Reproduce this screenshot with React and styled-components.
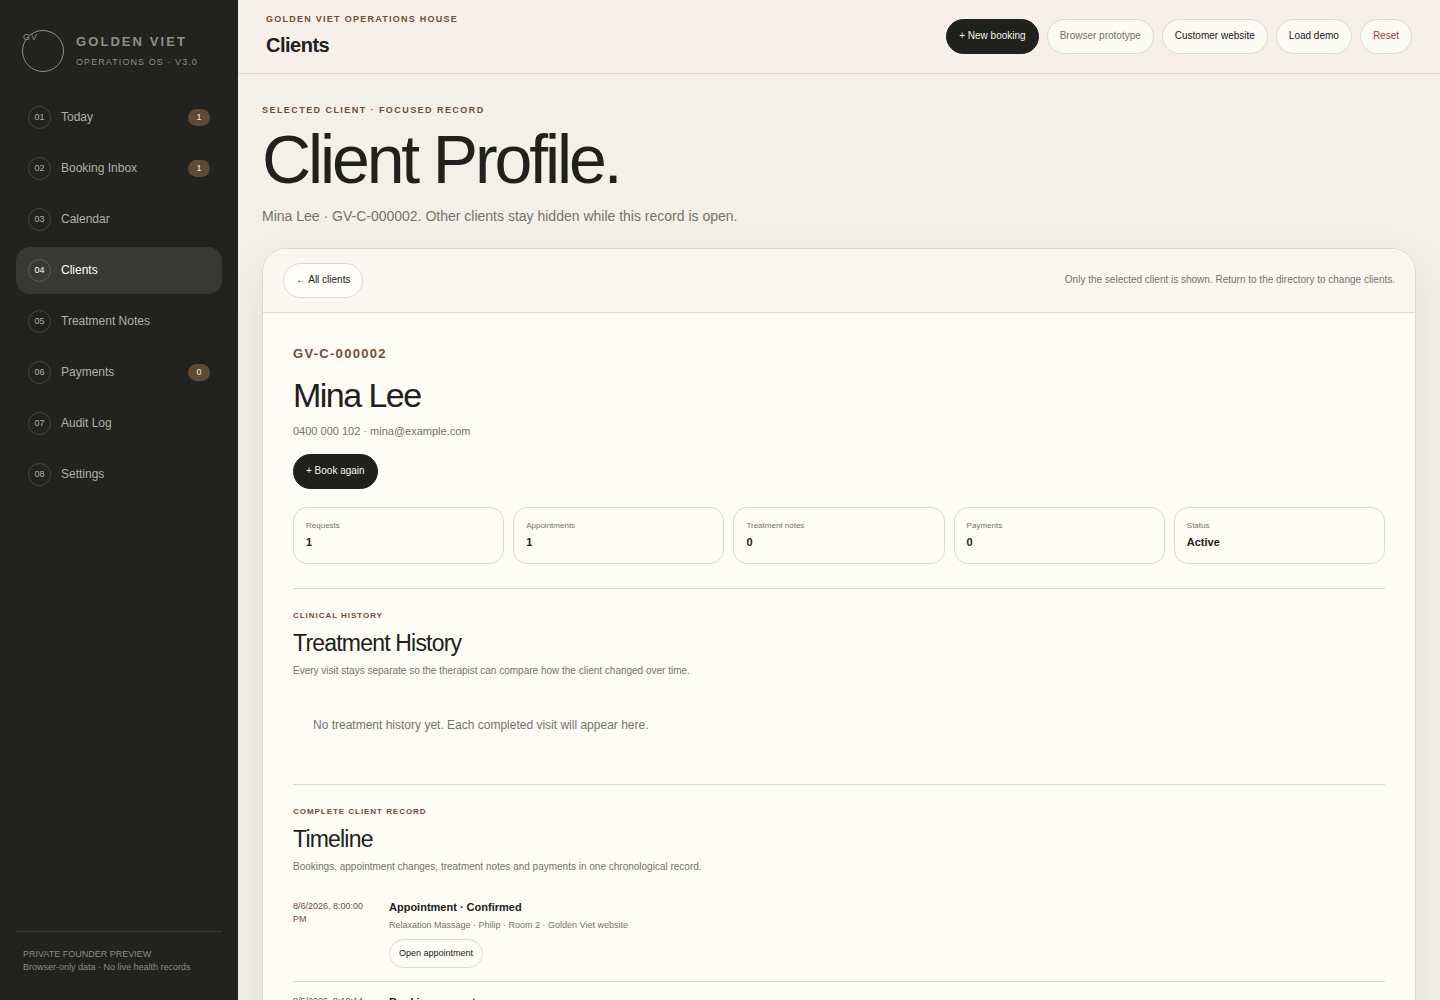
import React, { useState } from 'react';
import styled, { createGlobalStyle } from 'styled-components';

const Colors = {
  ink: '#20201c',
  sidebar: '#22221f',
  paper: '#fdfcf5',
  page: '#f3f0e8',
  topbar: '#f6f0e9',
  line: '#d9d9d3',
  muted: '#74736a',
  brown: '#6f4e37',
  badge: '#5f4a33',
  danger: '#9a4338',
};

const GlobalStyle = createGlobalStyle`
  * {
    box-sizing: border-box;
  }

  body {
    margin: 0;
    background: ${Colors.page};
    color: ${Colors.ink};
    font-family: 'Liberation Sans', Arial, sans-serif;
  }

  h1, h2, h3, p, dl, dd, ol {
    margin: 0;
    padding: 0;
  }

  button {
    font-family: inherit;
    cursor: pointer;
  }
`;

const Shell = styled.div`
  display: grid;
  grid-template-columns: 238px minmax(0, 1fr);
  min-height: 100vh;
`;

const Sidebar = styled.aside`
  position: sticky;
  top: 0;
  display: flex;
  flex-direction: column;
  height: 100vh;
  padding: 30px 16px 26px;
  background: ${Colors.sidebar};
`;

const Brand = styled.div`
  display: flex;
  align-items: center;
  gap: 12px;
  padding: 0 6px;
  margin-bottom: 22px;
  color: #8f8f89;
`;

const Logo = styled.span`
  width: 42px;
  height: 42px;
  border: 1px solid #8f8f89;
  border-radius: 50%;
  font-size: 9px;
  line-height: 12px;
  letter-spacing: 0.12em;
`;

const BrandText = styled.div`
  display: flex;
  flex-direction: column;
  gap: 8px;
`;

const BrandName = styled.strong`
  font-size: 13px;
  line-height: 15px;
  letter-spacing: 0.16em;
`;

const BrandSub = styled.span`
  font-size: 9px;
  line-height: 11px;
  letter-spacing: 0.12em;
`;

const Nav = styled.nav`
  display: flex;
  flex-direction: column;
  gap: 4px;
`;

const NavItem = styled.button`
  display: flex;
  align-items: center;
  gap: 10px;
  height: 47px;
  padding: 0 12px;
  border: 0;
  border-radius: 14px;
  background: ${(props) => (props.$active ? '#383834' : 'transparent')};
  color: ${(props) => (props.$active ? '#ffffff' : '#b0b0a9')};
  font-size: 12px;
  text-align: left;
`;

const NavNumber = styled.span`
  width: 23px;
  height: 23px;
  border: 1px solid ${(props) => (props.$active ? '#5e5e59' : '#474743')};
  border-radius: 50%;
  font-size: 9px;
  line-height: 20px;
  text-align: center;
`;

const NavLabel = styled.span`
  padding-bottom: 2px;
`;

const NavBadge = styled.span`
  min-width: 22px;
  margin-left: auto;
  padding: 3px 6px;
  border-radius: 9px;
  background: ${Colors.badge};
  color: #f3efe6;
  font-size: 9px;
  line-height: 11px;
  text-align: center;
`;

const SidebarFoot = styled.div`
  margin-top: auto;
  padding: 16px 7px 0;
  border-top: 1px solid #3b3b38;
  color: #8b8b85;
  font-size: 9px;
  line-height: 13px;
`;

const Topbar = styled.header`
  display: flex;
  align-items: center;
  justify-content: space-between;
  height: 74px;
  padding: 0 28px;
  border-bottom: 1px solid ${Colors.line};
  background: ${Colors.topbar};
`;

const TopTitle = styled.div`
  display: flex;
  flex-direction: column;
  gap: 8px;
  padding-bottom: 4px;
`;

const Eyebrow = styled.p`
  color: ${Colors.brown};
  font-size: ${(props) => (props.$small ? '8px' : '9px')};
  font-weight: 700;
  line-height: 12px;
  letter-spacing: ${(props) => props.$tracking || '0.12em'};
`;

const SectionName = styled.strong`
  font-size: 20px;
  line-height: 24px;
  letter-spacing: -0.025em;
`;

const Actions = styled.div`
  display: flex;
  gap: 8px;
`;

const Pill = styled.button`
  height: 35px;
  padding: 0 12px 2px;
  border: 1px solid ${Colors.line};
  border-radius: 18px;
  background: #fbfaf3;
  color: ${(props) => props.$color || Colors.ink};
  font-size: 10px;
`;

const PaperPill = styled(Pill)`
  background: #fefdf9;
`;

const DarkPill = styled(Pill)`
  border-color: ${Colors.ink};
  background: ${Colors.ink};
  color: #f6f4ec;
`;

const SmallPill = styled(Pill)`
  height: 29px;
  padding: 0 9px 1px;
  background: ${Colors.paper};
  font-size: 9px;
`;

const Content = styled.main`
  padding: 30px 24px 48px;
`;

const PageTitle = styled.h1`
  margin-top: 9px;
  font-size: 68px;
  font-weight: 400;
  line-height: 68px;
  letter-spacing: -0.046em;
`;

const Lead = styled.p`
  margin: 13px 0 22px;
  color: ${Colors.muted};
  font-size: 14px;
  line-height: 20px;
`;

const Card = styled.section`
  border: 1px solid ${Colors.line};
  border-radius: 24px;
  background: ${Colors.paper};
  box-shadow: 0 18px 50px rgba(80, 50, 40, 0.09);
  overflow: hidden;
`;

const CardHead = styled.div`
  display: flex;
  align-items: center;
  justify-content: space-between;
  padding: 14px 20px;
  border-bottom: 1px solid ${Colors.line};
  background: #faf7f0;
`;

const CardBody = styled.div`
  padding: 30px;
`;

const Note = styled.p`
  padding-bottom: 2px;
  color: ${Colors.muted};
  font-size: 10px;
  line-height: 15px;
`;

const ClientCode = styled.p`
  padding-top: 3px;
  color: ${Colors.brown};
  font-size: 13px;
  font-weight: 700;
  line-height: 16px;
  letter-spacing: 0.1em;
`;

const ClientName = styled.h2`
  margin-top: 15px;
  font-size: 34px;
  font-weight: 400;
  line-height: 36px;
  letter-spacing: -0.045em;
`;

const Contact = styled.p`
  margin: 10px 0 15px;
  color: ${Colors.muted};
  font-size: 11px;
  line-height: 16px;
`;

const Stats = styled.dl`
  display: grid;
  grid-template-columns: repeat(5, 1fr);
  gap: 9px;
  margin-top: 18px;
`;

const Stat = styled.div`
  height: 57px;
  padding: 12px;
  border: 1px solid ${Colors.line};
  border-radius: 14px;

  dt {
    color: ${Colors.muted};
    font-size: 8px;
    line-height: 12px;
  }

  dd {
    margin-top: 3px;
    font-size: 11px;
    font-weight: 700;
    line-height: 14px;
  }
`;

const Block = styled.section`
  margin-top: 24px;
  padding-top: 21px;
  border-top: 1px solid ${Colors.line};
`;

const BlockTitle = styled.h3`
  margin: 8px 0 7px;
  font-size: 23px;
  font-weight: 400;
  line-height: 26px;
  letter-spacing: -0.035em;
`;

const Empty = styled.p`
  padding: 36px 20px 26px;
  color: ${Colors.muted};
  font-size: 12px;
  line-height: 18px;
`;

const Timeline = styled.ol`
  margin-top: 11px;
  list-style: none;
`;

const TimelineRow = styled.li`
  display: grid;
  grid-template-columns: 82px minmax(0, 1fr);
  gap: 14px;
  padding: 13px 0;
  border-bottom: 1px solid ${Colors.line};
`;

const When = styled.time`
  color: ${Colors.brown};
  font-size: 9px;
  line-height: 13px;
`;

const EventTitle = styled.strong`
  display: block;
  font-size: 11px;
  line-height: 14px;
`;

const EventMeta = styled.p`
  margin: 5px 0 7px;
  color: ${Colors.muted};
  font-size: 9px;
  line-height: 13px;
`;

const navItems = [
  { label: 'Today', count: 1 },
  { label: 'Booking Inbox', count: 1 },
  { label: 'Calendar' },
  { label: 'Clients' },
  { label: 'Treatment Notes' },
  { label: 'Payments', count: 0 },
  { label: 'Audit Log' },
  { label: 'Settings' },
];

const stats = [
  ['Requests', '1'],
  ['Appointments', '1'],
  ['Treatment notes', '0'],
  ['Payments', '0'],
  ['Status', 'Active'],
];

const events = [
  {
    when: '8/6/2026, 8:00:00 PM',
    title: 'Appointment · Confirmed',
    meta: 'Relaxation Massage · Philip · Room 2 · Golden Viet website',
    action: 'Open appointment',
  },
  {
    when: '8/5/2026, 8:10:14 PM',
    title: 'Booking request',
    meta: 'Relaxation Massage · Golden Viet website',
    action: 'Open request',
  },
];

const App = () => {
  const [active, setActive] = useState('Clients');

  return (
    <>
      <GlobalStyle />
      <Shell>
        <Sidebar>
          <Brand>
            <Logo>GV</Logo>
            <BrandText>
              <BrandName>GOLDEN VIET</BrandName>
              <BrandSub>OPERATIONS OS · V3.0</BrandSub>
            </BrandText>
          </Brand>
          <Nav>
            {navItems.map(({ label, count }, index) => (
              <NavItem
                key={label}
                type='button'
                $active={label === active}
                onClick={() => setActive(label)}
              >
                <NavNumber $active={label === active}>0{index + 1}</NavNumber>
                <NavLabel>{label}</NavLabel>
                {count !== undefined && <NavBadge>{count}</NavBadge>}
              </NavItem>
            ))}
          </Nav>
          <SidebarFoot>
            PRIVATE FOUNDER PREVIEW
            <br />
            Browser-only data · No live health records
          </SidebarFoot>
        </Sidebar>
        <div>
          <Topbar>
            <TopTitle>
              <Eyebrow $tracking='0.14em'>GOLDEN VIET OPERATIONS HOUSE</Eyebrow>
              <SectionName>{active}</SectionName>
            </TopTitle>
            <Actions>
              <DarkPill type='button'>+ New booking</DarkPill>
              <Pill type='button' $color={Colors.muted}>
                Browser prototype
              </Pill>
              <Pill type='button'>Customer website</Pill>
              <Pill type='button'>Load demo</Pill>
              <Pill type='button' $color={Colors.danger}>
                Reset
              </Pill>
            </Actions>
          </Topbar>
          <Content>
            <Eyebrow $tracking='0.16em'>
              SELECTED CLIENT · FOCUSED RECORD
            </Eyebrow>
            <PageTitle>Client Profile.</PageTitle>
            <Lead>
              Mina Lee · GV-C-000002. Other clients stay hidden while this
              record is open.
            </Lead>
            <Card>
              <CardHead>
                <PaperPill type='button'>← All clients</PaperPill>
                <Note>
                  Only the selected client is shown. Return to the directory to
                  change clients.
                </Note>
              </CardHead>
              <CardBody>
                <ClientCode>GV-C-000002</ClientCode>
                <ClientName>Mina Lee</ClientName>
                <Contact>0400 000 102 · mina@example.com</Contact>
                <DarkPill type='button'>+ Book again</DarkPill>
                <Stats>
                  {stats.map(([label, value]) => (
                    <Stat key={label}>
                      <dt>{label}</dt>
                      <dd>{value}</dd>
                    </Stat>
                  ))}
                </Stats>
                <Block>
                  <Eyebrow $small>CLINICAL HISTORY</Eyebrow>
                  <BlockTitle>Treatment History</BlockTitle>
                  <Note>
                    Every visit stays separate so the therapist can compare how
                    the client changed over time.
                  </Note>
                  <Empty>
                    No treatment history yet. Each completed visit will appear
                    here.
                  </Empty>
                </Block>
                <Block>
                  <Eyebrow $small>COMPLETE CLIENT RECORD</Eyebrow>
                  <BlockTitle>Timeline</BlockTitle>
                  <Note>
                    Bookings, appointment changes, treatment notes and payments
                    in one chronological record.
                  </Note>
                  <Timeline>
                    {events.map((event) => (
                      <TimelineRow key={event.when}>
                        <When>{event.when}</When>
                        <div>
                          <EventTitle>{event.title}</EventTitle>
                          <EventMeta>{event.meta}</EventMeta>
                          <SmallPill type='button'>{event.action}</SmallPill>
                        </div>
                      </TimelineRow>
                    ))}
                  </Timeline>
                </Block>
              </CardBody>
            </Card>
          </Content>
        </div>
      </Shell>
    </>
  );
};

export default App;
